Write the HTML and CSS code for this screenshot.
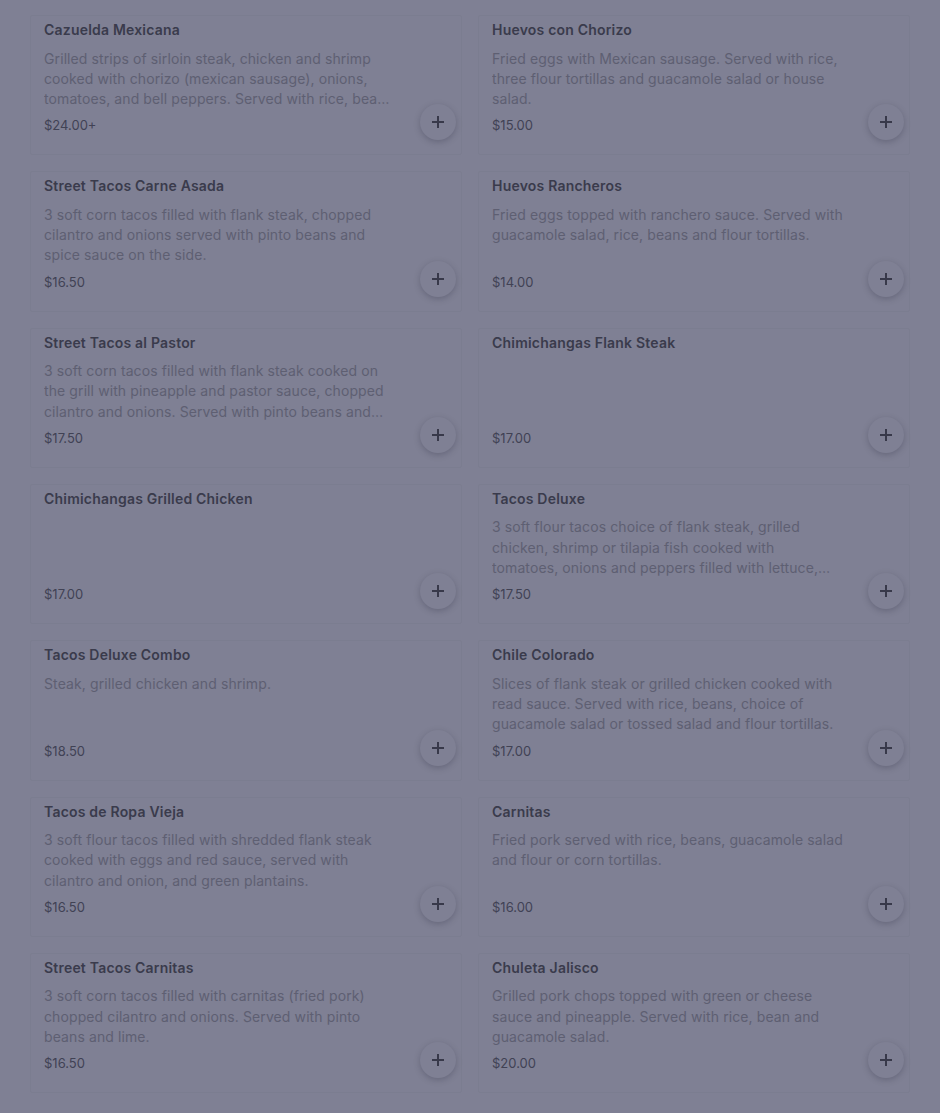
FILE: index.html
```html
<!DOCTYPE html>
<html lang="en">
<head>
<meta charset="utf-8">
<title>Menu</title>
<link rel="stylesheet" href="styles.css">
</head>
<body>
<main class="menu">
  <article class="card"><div class="info"><h3 class="name">Cazuelda Mexicana</h3><p class="desc">Grilled strips of sirloin steak, chicken and shrimp cooked with chorizo (mexican sausage), onions, tomatoes, and bell peppers. Served with rice, beans and tortillas.</p><div class="price">$24.00+</div></div><button class="add" aria-label="Add"><svg viewBox="0 0 16 16" width="16" height="16"><path d="M8 2v12M2 8h12"/></svg></button></article>
  <article class="card"><div class="info"><h3 class="name">Huevos con Chorizo</h3><p class="desc">Fried eggs with Mexican sausage. Served with rice, three flour tortillas and guacamole salad or house salad.</p><div class="price">$15.00</div></div><button class="add" aria-label="Add"><svg viewBox="0 0 16 16" width="16" height="16"><path d="M8 2v12M2 8h12"/></svg></button></article>

  <article class="card"><div class="info"><h3 class="name">Street Tacos Carne Asada</h3><p class="desc">3 soft corn tacos filled with flank steak, chopped cilantro and onions served with pinto beans and spice sauce on the side.</p><div class="price">$16.50</div></div><button class="add" aria-label="Add"><svg viewBox="0 0 16 16" width="16" height="16"><path d="M8 2v12M2 8h12"/></svg></button></article>
  <article class="card"><div class="info"><h3 class="name">Huevos Rancheros</h3><p class="desc">Fried eggs topped with ranchero sauce. Served with guacamole salad, rice, beans and flour tortillas.</p><div class="price">$14.00</div></div><button class="add" aria-label="Add"><svg viewBox="0 0 16 16" width="16" height="16"><path d="M8 2v12M2 8h12"/></svg></button></article>

  <article class="card"><div class="info"><h3 class="name">Street Tacos al Pastor</h3><p class="desc">3 soft corn tacos filled with flank steak cooked on the grill with pineapple and pastor sauce, chopped cilantro and onions. Served with pinto beans and spicy sauce on the side.</p><div class="price">$17.50</div></div><button class="add" aria-label="Add"><svg viewBox="0 0 16 16" width="16" height="16"><path d="M8 2v12M2 8h12"/></svg></button></article>
  <article class="card"><div class="info"><h3 class="name">Chimichangas Flank Steak</h3><div class="price">$17.00</div></div><button class="add" aria-label="Add"><svg viewBox="0 0 16 16" width="16" height="16"><path d="M8 2v12M2 8h12"/></svg></button></article>

  <article class="card"><div class="info"><h3 class="name">Chimichangas Grilled Chicken</h3><div class="price">$17.00</div></div><button class="add" aria-label="Add"><svg viewBox="0 0 16 16" width="16" height="16"><path d="M8 2v12M2 8h12"/></svg></button></article>
  <article class="card"><div class="info"><h3 class="name">Tacos Deluxe</h3><p class="desc">3 soft flour tacos choice of flank steak, grilled chicken, shrimp or tilapia fish cooked with tomatoes, onions and peppers filled with lettuce, cheese and sour cream.</p><div class="price">$17.50</div></div><button class="add" aria-label="Add"><svg viewBox="0 0 16 16" width="16" height="16"><path d="M8 2v12M2 8h12"/></svg></button></article>

  <article class="card"><div class="info"><h3 class="name">Tacos Deluxe Combo</h3><p class="desc">Steak, grilled chicken and shrimp.</p><div class="price">$18.50</div></div><button class="add" aria-label="Add"><svg viewBox="0 0 16 16" width="16" height="16"><path d="M8 2v12M2 8h12"/></svg></button></article>
  <article class="card"><div class="info"><h3 class="name">Chile Colorado</h3><p class="desc">Slices of flank steak or grilled chicken cooked with read sauce. Served with rice, beans, choice of guacamole salad or tossed salad and flour tortillas.</p><div class="price">$17.00</div></div><button class="add" aria-label="Add"><svg viewBox="0 0 16 16" width="16" height="16"><path d="M8 2v12M2 8h12"/></svg></button></article>

  <article class="card"><div class="info"><h3 class="name">Tacos de Ropa Vieja</h3><p class="desc">3 soft flour tacos filled with shredded flank steak cooked with eggs and red sauce, served with cilantro and onion, and green plantains.</p><div class="price">$16.50</div></div><button class="add" aria-label="Add"><svg viewBox="0 0 16 16" width="16" height="16"><path d="M8 2v12M2 8h12"/></svg></button></article>
  <article class="card"><div class="info"><h3 class="name">Carnitas</h3><p class="desc">Fried pork served with rice, beans, guacamole salad and flour or corn tortillas.</p><div class="price">$16.00</div></div><button class="add" aria-label="Add"><svg viewBox="0 0 16 16" width="16" height="16"><path d="M8 2v12M2 8h12"/></svg></button></article>

  <article class="card"><div class="info"><h3 class="name">Street Tacos Carnitas</h3><p class="desc">3 soft corn tacos filled with carnitas (fried pork) chopped cilantro and onions. Served with pinto beans and lime.</p><div class="price">$16.50</div></div><button class="add" aria-label="Add"><svg viewBox="0 0 16 16" width="16" height="16"><path d="M8 2v12M2 8h12"/></svg></button></article>
  <article class="card"><div class="info"><h3 class="name">Chuleta Jalisco</h3><p class="desc">Grilled pork chops topped with green or cheese sauce and pineapple. Served with rice, bean and guacamole salad.</p><div class="price">$20.00</div></div><button class="add" aria-label="Add"><svg viewBox="0 0 16 16" width="16" height="16"><path d="M8 2v12M2 8h12"/></svg></button></article>
</main>
</body>
</html>
```

FILE: styles.css
```css
html, body {
  margin: 0;
  padding: 0;
  background: #7f8094;
}

body {
  font-family: Inter, "Noto Sans", sans-serif;
  height: 1113px;
  overflow: hidden;
}

.menu {
  display: grid;
  grid-template-columns: 432px 432px;
  grid-auto-rows: 140.33px;
  column-gap: 16px;
  row-gap: 16px;
  padding: 15px 30px 0 30px;
}

.card {
  box-sizing: border-box;
  display: flex;
  align-items: stretch;
  padding: 4px 5px 14px 13px;
  border: 1px solid rgba(118, 119, 138, 0.4);
  border-radius: 2px;
  min-width: 0;
}

.info {
  flex: 1;
  display: flex;
  flex-direction: column;
  min-width: 0;
}

.name {
  margin: 0 0 8.5px 0;
  font-size: 14px;
  line-height: 20px;
  font-weight: 600;
  letter-spacing: 0.2px;
  color: #3a3b4c;
}

.desc {
  margin: 0;
  max-width: 352px;
  font-size: 14px;
  line-height: 20.33px;
  letter-spacing: 0.1px;
  color: #5e5f72;
  display: -webkit-box;
  -webkit-line-clamp: 3;
  -webkit-box-orient: vertical;
  overflow: hidden;
}

.price {
  margin-top: auto;
  margin-bottom: 5px;
  font-size: 13px;
  line-height: 20px;
  color: #414254;
}

.add {
  flex: none;
  align-self: flex-end;
  width: 36px;
  height: 36px;
  padding: 0;
  border: none;
  border-radius: 50%;
  background: #7f8094;
  box-shadow: 0 2px 6px rgba(40, 40, 60, 0.28);
  display: flex;
  align-items: center;
  justify-content: center;
}

.add svg {
  fill: none;
  stroke: #38394a;
  stroke-width: 2;
}
```
